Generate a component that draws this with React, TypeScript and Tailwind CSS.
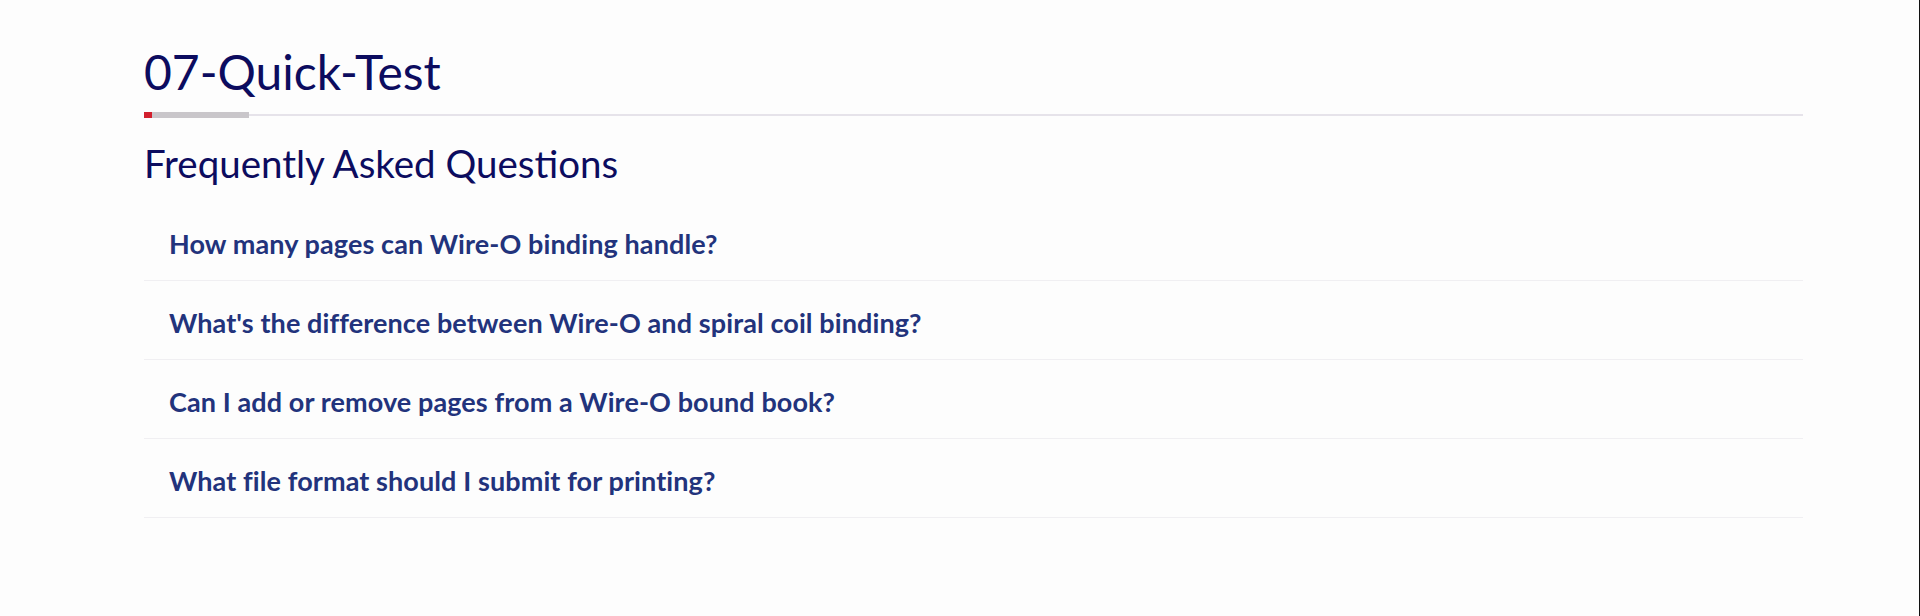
const faqs = [
  'How many pages can Wire-O binding handle?',
  "What's the difference between Wire-O and spiral coil binding?",
  'Can I add or remove pages from a Wire-O bound book?',
  'What file format should I submit for printing?',
]

export default function App() {
  return (
    <div
      className="h-[616px] w-full bg-[#fdfdfd] border-r border-[#111] overflow-hidden"
      style={{ fontFamily: 'Lato, "Open Sans", sans-serif' }}
    >
      <div className="ml-[144px] w-[1659px] pt-[43px]">
        <h1 className="text-[48px] leading-[1.2] font-normal text-[#0c0c5f]">07-Quick-Test</h1>

        <div className="mt-[11px] flex items-center">
          <div className="w-[8px] h-[6px] bg-[#d2202e]" />
          <div className="w-[97px] h-[6px] bg-[#c9c6ca]" />
          <div className="flex-1 h-[2px] bg-[#e6e3ea]" />
        </div>

        <h2 className="mt-[22px] text-[38.5px] leading-[1.2] font-normal text-[#0c0c5f]">
          Frequently Asked Questions
        </h2>

        <div className="mt-[16px] flex flex-col">
          {faqs.map((q) => (
            <button
              key={q}
              className="w-full text-left pl-[25px] pt-[27px] pb-[21px] border-b border-[#f0eff2] cursor-pointer"
            >
              <span className="block text-[27px] leading-[30px] tracking-[0.1px] font-bold text-[#22337c]">{q}</span>
            </button>
          ))}
        </div>
      </div>
    </div>
  )
}
